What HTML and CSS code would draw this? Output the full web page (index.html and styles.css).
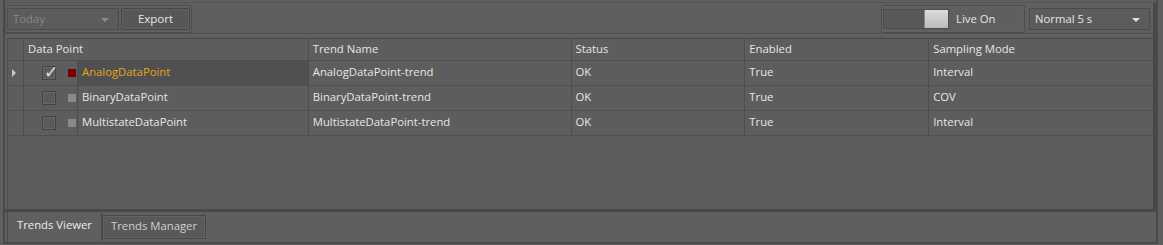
FILE: index.html
```html
<!DOCTYPE html>
<html lang="en">
<head>
    <meta charset="UTF-8">
    <title>Trends</title>
    <link rel="stylesheet" href="styles.css">
</head>
<body>
    <div class="window">
        <div class="pane">
            <div class="toolbar">
                <div class="group">
                    <div class="combo disabled">Today<span class="arrow"></span></div>
                    <button class="btn">Export</button>
                </div>
                <div class="spacer"></div>
                <div class="group">
                    <div class="toggle"><span class="knob"></span></div>
                    <span class="live">Live On</span>
                </div>
                <div class="combo mode">Normal 5 s<span class="arrow"></span></div>
            </div>

            <div class="grid">
                <div class="row head">
                    <div class="ind"></div>
                    <div class="cell c1">Data Point</div>
                    <div class="cell c2">Trend Name</div>
                    <div class="cell c3">Status</div>
                    <div class="cell c4">Enabled</div>
                    <div class="cell c5">Sampling Mode</div>
                </div>
                <div class="row current">
                    <div class="ind"><span class="tri"></span></div>
                    <div class="cell c1 dp">
                        <span class="check on">&#10003;</span>
                        <span class="swatch red"></span>
                        <span class="name">AnalogDataPoint</span>
                    </div>
                    <div class="cell c2">AnalogDataPoint-trend</div>
                    <div class="cell c3">OK</div>
                    <div class="cell c4">True</div>
                    <div class="cell c5">Interval</div>
                </div>
                <div class="row">
                    <div class="ind"></div>
                    <div class="cell c1 dp">
                        <span class="check"></span>
                        <span class="swatch"></span>
                        <span class="name">BinaryDataPoint</span>
                    </div>
                    <div class="cell c2">BinaryDataPoint-trend</div>
                    <div class="cell c3">OK</div>
                    <div class="cell c4">True</div>
                    <div class="cell c5">COV</div>
                </div>
                <div class="row">
                    <div class="ind"></div>
                    <div class="cell c1 dp">
                        <span class="check"></span>
                        <span class="swatch"></span>
                        <span class="name">MultistateDataPoint</span>
                    </div>
                    <div class="cell c2">MultistateDataPoint-trend</div>
                    <div class="cell c3">OK</div>
                    <div class="cell c4">True</div>
                    <div class="cell c5">Interval</div>
                </div>
            </div>
        </div>

        <div class="tabs">
            <div class="tab active">Trends Viewer</div>
            <div class="tab">Trends Manager</div>
        </div>
    </div>
</body>
</html>
```

FILE: styles.css
```css
body {
    margin: 0;
    background-color: #5f5f5f;
    font-family: "Open Sans", "Noto Sans", sans-serif;
    font-size: 11.3px;
    color: #e6e6e6;
}

.window {
    height: 244px;
    width: 1155px;
    margin-left: 3px;
    border-left: 2px solid #4a4a4a;
    border-right: 2px solid #4a4a4a;
    border-bottom: 2px solid #4a4a4a;
    box-sizing: border-box;
    display: flex;
    flex-direction: column;
}

.pane {
    height: 210px;
    border-bottom: 3px solid #484848;
    border-right: 3px solid #484848;
    border-top: 1px solid #555;
    box-sizing: border-box;
    margin-top: 2px;
    display: flex;
    flex-direction: column;
}

/* toolbar */
.toolbar {
    display: flex;
    align-items: center;
    height: 29px;
    padding: 1px 3px 0 0;
    border-bottom: 1px solid #4c4c4c;
    box-shadow: 0 1px 0 #666;
}

.spacer {
    flex: 1;
}

.group {
    display: flex;
    align-items: center;
    height: 26px;
    padding: 0 1px;
    border: 1px solid #4e4e4e;
    box-shadow: inset 0 0 0 1px #626262;
    border-radius: 2px;
}

.combo {
    position: relative;
    box-sizing: border-box;
    height: 22px;
    line-height: 19px;
    padding-left: 5px;
    border: 1px solid #4b4b4b;
    background-color: #5c5c5c;
}

.combo.disabled {
    width: 112px;
    color: #868686;
}

.combo.mode {
    width: 121px;
    margin-left: 4px;
    color: #e6e6e6;
}

.arrow {
    position: absolute;
    right: 9px;
    top: 9px;
    border-left: 4px solid transparent;
    border-right: 4px solid transparent;
    border-top: 4px solid #8c8c8c;
}

.mode .arrow {
    border-top-color: #e0e0e0;
}

.btn {
    margin-left: 2px;
    width: 69px;
    height: 22px;
    padding: 0 0 1px;
    font-family: inherit;
    font-size: 11.5px;
    color: #e6e6e6;
    background-color: #575757;
    border: 1px solid #474747;
    border-radius: 2px;
    box-shadow: inset 0 0 0 1px #606060;
}

.toggle {
    position: relative;
    width: 66px;
    height: 20px;
    box-sizing: border-box;
    border: 1px solid #4d4d4d;
    background-color: #585858;
}

.knob {
    position: absolute;
    right: 0;
    top: 0;
    width: 23px;
    height: 18px;
    background: linear-gradient(#dcdcdc, #bcbcbc);
    border-left: 1px solid #888;
}

.live {
    width: 67px;
    padding-left: 7px;
    padding-bottom: 1px;
}

/* grid */
.grid {
    margin: 4px 0 0 2px;
    flex: 1;
    border-top: 1px solid #484848;
    border-left: 1px solid #4c4c4c;
    background-color: #5d5d5d;
}

.row {
    display: flex;
    height: 25px;
    border-bottom: 1px solid #4f4f4f;
    box-sizing: border-box;
}

.row.head {
    height: 22px;
}

.ind {
    width: 15px;
    border-right: 1px solid #4f4f4f;
    display: flex;
    align-items: center;
    justify-content: center;
}

.tri {
    border-top: 4px solid transparent;
    border-bottom: 4px solid transparent;
    border-left: 4px solid #c8c8c8;
    margin-left: -2px;
}

.cell {
    box-sizing: border-box;
    border-right: 1px solid #4f4f4f;
    padding-left: 4px;
    line-height: 22px;
    white-space: nowrap;
}

.head .cell {
    line-height: 19px;
}

.c1 { width: 285px; }
.c2 { width: 263px; }
.c3 { width: 174px; }
.c4 { width: 184px; }
.c5 { width: 224px; border-right: none; }

.dp {
    display: flex;
    align-items: center;
    padding-left: 0;
}

.check {
    width: 12px;
    height: 12px;
    margin-left: 18px;
    border: 1px solid #444;
    background-color: #5a5a5a;
    box-shadow: inset 0 0 0 1px #666;
    font-size: 17px;
    line-height: 10px;
    color: #e0e0e0;
    text-indent: 1px;
}

.swatch {
    width: 8px;
    height: 8px;
    margin-left: 12px;
    background-color: #8a8a8a;
}

.swatch.red {
    background-color: #7a0000;
}

.name {
    align-self: stretch;
    flex: 1;
    margin-left: 1px;
    padding-left: 4px;
    border-left: 1px solid #4f4f4f;
    line-height: 22px;
}

.current .name {
    background-color: #505050;
    color: #e9a21e;
}

/* tabs */
.tabs {
    display: flex;
    align-items: flex-start;
    padding-left: 2px;
    flex: 1;
}

.tab {
    box-sizing: border-box;
    height: 24px;
    line-height: 20px;
    margin-top: 3px;
    padding: 0 8px;
    color: #cfcfcf;
    background-color: #595959;
    border: 1px solid #474747;
    box-shadow: inset 0 0 0 1px #626262;
}

.tab.active {
    height: 30px;
    margin-top: 0;
    padding: 3px 9px 0;
    color: #ececec;
    background-color: #5f5f5f;
    border-top: none;
    border-bottom: none;
    box-shadow: none;
    border-left: 1px solid #4a4a4a;
    border-right: 1px solid #4a4a4a;
}
```
